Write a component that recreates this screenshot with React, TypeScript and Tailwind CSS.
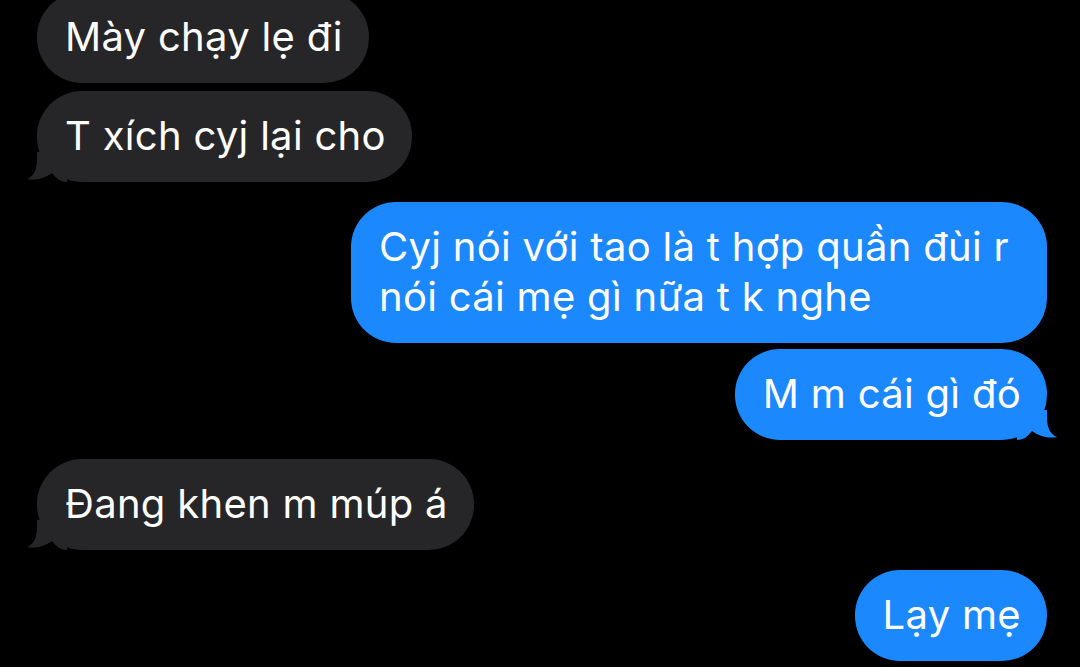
import React from "react"

type Msg = { text: string[]; me: boolean; tail: boolean; gap: string; wide?: boolean }

const MESSAGES: Msg[] = [
  { text: ["Mày chạy lẹ đi"], me: false, tail: false, gap: "mt-0" },
  { text: ["T xích cyj lại cho"], me: false, tail: true, gap: "mt-2" },
  {
    text: ["Cyj nói với tao là t hợp quần đùi r", "nói cái mẹ gì nữa t k nghe"],
    me: true,
    tail: false,
    gap: "mt-5",
    wide: true,
  },
  { text: ["M m cái gì đó"], me: true, tail: true, gap: "mt-[6px]" },
  { text: ["Đang khen m múp á"], me: false, tail: true, gap: "mt-[19px]" },
  { text: ["Lạy mẹ"], me: true, tail: false, gap: "mt-5" },
]

function Tail({ me }: { me: boolean }) {
  // iMessage style tail, drawn for the left side and mirrored for sent bubbles
  return (
    <svg
      width="40"
      height="30"
      viewBox="0 0 40 30"
      className={
        me
          ? "absolute -right-[10px] bottom-0 -scale-x-100 fill-[#1b88fd]"
          : "absolute -left-[10px] bottom-0 fill-[#262628]"
      }
      aria-hidden
    >
      <path d="M10 0 L10 8 C10 18 6 25 0 27 C7 28.5 17 27 25 21 C29 26 33 30 40 30 L40 0 Z" />
    </svg>
  )
}

function Bubble({ msg }: { msg: Msg }) {
  return (
    <div className={`flex ${msg.me ? "justify-end" : "justify-start"} ${msg.gap}`}>
      <div
        className={`relative rounded-[45px] pl-7 pr-[26px] pt-5 pb-[21px] text-[40px] leading-[50px] tracking-[0.3px] text-white ${
          msg.me ? "bg-[#1b88fd]" : "bg-[#262628]"
        } ${msg.wide ? "w-[696px]" : ""}`}
      >
        {msg.tail && <Tail me={msg.me} />}
        <div className="relative">
          {msg.text.map((line, i) => (
            <div key={i} className="whitespace-nowrap">
              {line}
            </div>
          ))}
        </div>
      </div>
    </div>
  )
}

export default function App() {
  return (
    <div
      className="min-h-screen h-[667px] overflow-hidden bg-black"
      style={{ fontFamily: "Inter, 'Noto Sans', sans-serif" }}
    >
      <div className="-mt-2 flex flex-col pl-[37px] pr-[33px]">
        {MESSAGES.map((m, i) => (
          <Bubble key={i} msg={m} />
        ))}
      </div>
    </div>
  )
}
